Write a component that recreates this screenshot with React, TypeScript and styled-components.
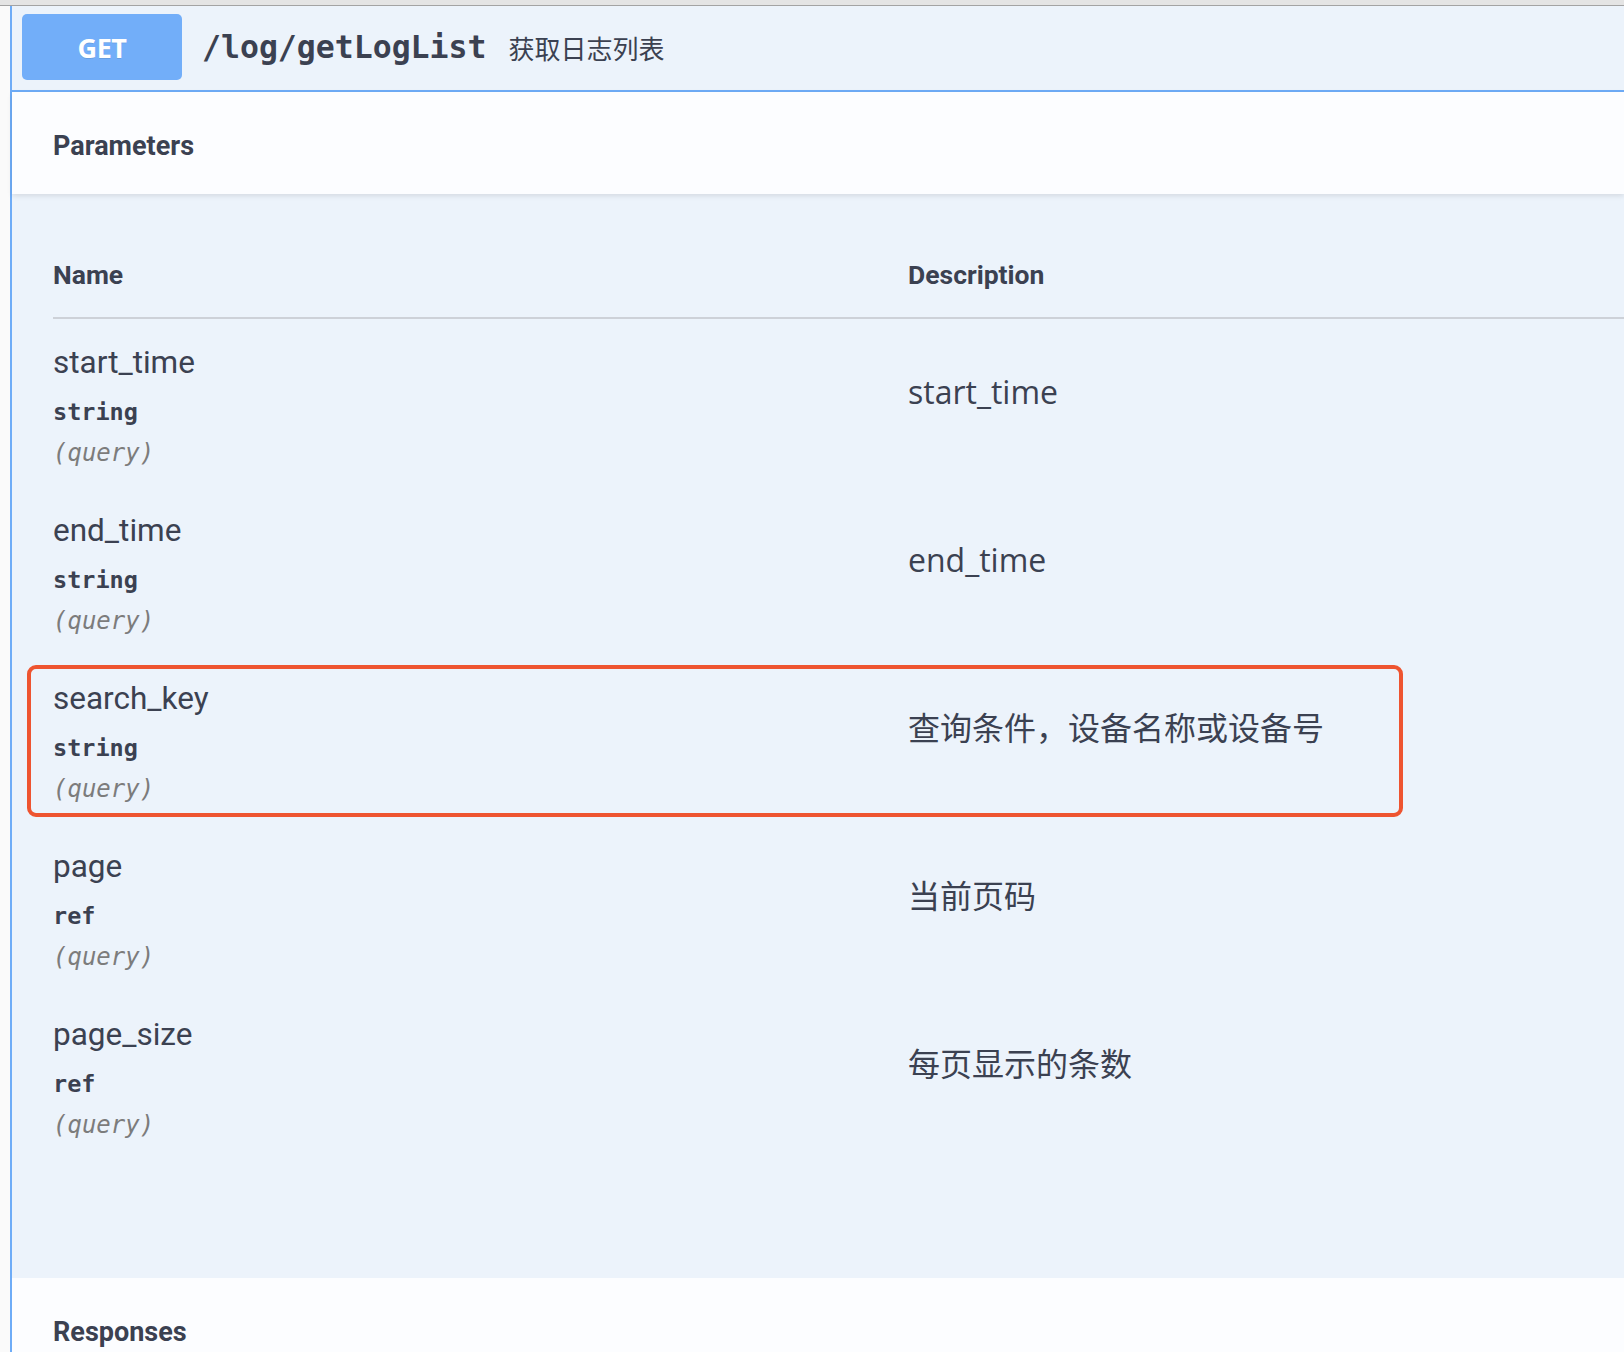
import React from "react";
import styled, { createGlobalStyle } from "styled-components";

const GlobalStyle = createGlobalStyle`
  html, body {
    margin: 0;
    padding: 0;
    overflow: hidden;
    background: #fafafa;
  }
  * { box-sizing: border-box; }
`;

const TEXT = "#3b4151";
const BLUE = "#6eacf7";

const Page = styled.div`
  width: 1624px;
  height: 1352px;
  overflow: hidden;
  background: #fafafa;
  display: flex;
  flex-direction: column;
`;

const TopStrip = styled.div`
  height: 6px;
  flex: none;
  background: #e4e4e4;
  border-bottom: 1px solid #a3a3a3;
`;

const Wrap = styled.div`
  flex: 1;
  padding-left: 10px;
  display: flex;
  flex-direction: column;
`;

const OpBlock = styled.section`
  flex: 1;
  border-left: 2px solid ${BLUE};
  background: #ecf3fb;
  display: flex;
  flex-direction: column;
`;

const Summary = styled.header`
  display: flex;
  align-items: center;
  padding: 8px 10px 10px;
  border-bottom: 2px solid ${BLUE};
  background: #ecf3fb;
`;

const Method = styled.span`
  width: 160px;
  height: 66px;
  flex: none;
  display: flex;
  align-items: center;
  justify-content: center;
  border-radius: 5px;
  background: #72aef9;
  color: #fff;
  font-family: "Open Sans", sans-serif;
  font-weight: 700;
  font-size: 27px;
  letter-spacing: -0.5px;
  text-shadow: 0 1px 0 rgba(0, 0, 0, 0.1);
  margin-right: 20px;
`;

const Path = styled.span`
  font-family: "DejaVu Sans Mono", monospace;
  font-weight: 700;
  font-size: 31.5px;
  color: ${TEXT};
  margin-right: 22px;
`;

const SummaryDesc = styled.span`
  font-family: "Noto Sans CJK SC", sans-serif;
  font-size: 26px;
  color: ${TEXT};
`;

const SectionHeader = styled.div<{ $shadow?: boolean }>`
  background: #fcfdff;
  padding: 38px 41px 32px;
  box-shadow: ${(p) => (p.$shadow ? "0 2px 5px rgba(0, 0, 0, 0.1)" : "none")};
  position: relative;
  z-index: 1;
`;

const SectionTitle = styled.h4`
  margin: 0;
  font-family: Roboto, sans-serif;
  font-weight: 700;
  font-size: 27px;
  line-height: 32px;
  color: ${TEXT};
`;

const TableArea = styled.div`
  padding: 0 0 119px 41px;
  background: #ecf3fb;
`;

const Grid = styled.div`
  display: grid;
  grid-template-columns: 855px 1fr;
`;

const HeadRow = styled(Grid)`
  border-bottom: 2px solid #cdd1d8;
`;

const HeadCell = styled.div`
  padding: 65px 0 26px;
  font-family: Roboto, sans-serif;
  font-weight: 700;
  font-size: 26.5px;
  line-height: 32px;
  color: ${TEXT};
`;

const Row = styled(Grid)`
  position: relative;
  height: 168px;
`;

const NameCell = styled.div`
  padding-top: 24px;
  display: flex;
  flex-direction: column;
`;

const ParamName = styled.div`
  font-family: Roboto, sans-serif;
  font-size: 31.5px;
  line-height: 40px;
  color: ${TEXT};
`;

const ParamType = styled.div`
  margin-top: 14px;
  font-family: "DejaVu Sans Mono", monospace;
  font-weight: 700;
  font-size: 23.5px;
  line-height: 30px;
  color: ${TEXT};
`;

const ParamIn = styled.div`
  margin-top: 11px;
  font-family: "DejaVu Sans Mono", monospace;
  font-style: italic;
  font-size: 24px;
  line-height: 30px;
  color: #7c7c7c;
`;

const DescCell = styled.div`
  padding-top: 51px;
  font-family: "Open Sans", "Noto Sans CJK SC", sans-serif;
  font-size: 32px;
  line-height: 44px;
  color: ${TEXT};
`;

const Highlight = styled.div`
  position: absolute;
  top: 10px;
  bottom: 6px;
  left: -26px;
  width: 1376px;
  border: 4px solid #ee5430;
  border-radius: 9px;
  pointer-events: none;
`;

type Param = { name: string; type: string; desc: string; marked?: boolean };

const params: Param[] = [
  { name: "start_time", type: "string", desc: "start_time" },
  { name: "end_time", type: "string", desc: "end_time" },
  { name: "search_key", type: "string", desc: "查询条件，设备名称或设备号", marked: true },
  { name: "page", type: "ref", desc: "当前页码" },
  { name: "page_size", type: "ref", desc: "每页显示的条数" },
];

export default function App() {
  return (
    <>
      <GlobalStyle />
      <Page>
        <TopStrip />
        <Wrap>
          <OpBlock>
            <Summary>
              <Method>GET</Method>
              <Path>/log/getLogList</Path>
              <SummaryDesc>获取日志列表</SummaryDesc>
            </Summary>
            <SectionHeader $shadow>
              <SectionTitle>Parameters</SectionTitle>
            </SectionHeader>
            <TableArea>
              <HeadRow>
                <HeadCell>Name</HeadCell>
                <HeadCell>Description</HeadCell>
              </HeadRow>
              {params.map((p) => (
                <Row key={p.name}>
                  {p.marked && <Highlight />}
                  <NameCell>
                    <ParamName>{p.name}</ParamName>
                    <ParamType>{p.type}</ParamType>
                    <ParamIn>(query)</ParamIn>
                  </NameCell>
                  <DescCell>{p.desc}</DescCell>
                </Row>
              ))}
            </TableArea>
            <SectionHeader>
              <SectionTitle>Responses</SectionTitle>
            </SectionHeader>
          </OpBlock>
        </Wrap>
      </Page>
    </>
  );
}
